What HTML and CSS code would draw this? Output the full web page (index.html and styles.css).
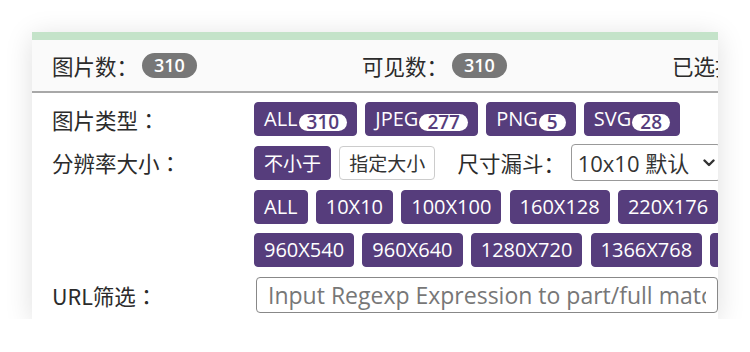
FILE: index.html
```html
<!DOCTYPE html>
<html lang="zh-CN">
<head>
<meta charset="utf-8">
<title>图片筛选</title>
<link rel="stylesheet" href="styles.css">
</head>
<body>
<div class="panel">
  <div class="stats">
    <div class="stat">图片数：<span class="count">310</span></div>
    <div class="stat">可见数：<span class="count">310</span></div>
    <div class="stat">已选择：<span class="count">0</span></div>
  </div>
  <div class="filters">
    <div class="label">图片类型<span class="colon">：</span></div>
    <div class="cell">
      <div class="row">
        <button class="btn">ALL<span class="badge">310</span></button>
        <button class="btn">JPEG<span class="badge">277</span></button>
        <button class="btn">PNG<span class="badge">5</span></button>
        <button class="btn">SVG<span class="badge">28</span></button>
      </div>
    </div>

    <div class="label">分辨率大小<span class="colon">：</span></div>
    <div class="cell">
      <div class="row">
        <button class="btn btn-cjk">不小于</button>
        <button class="btn btn-cjk btn-outline">指定大小</button>
        <span class="funnel-label">尺寸漏斗<span class="colon">：</span></span>
        <div class="select-box">
          <select class="select">
            <option>10x10 默认</option>
            <option>100x100</option>
          </select>
          <svg class="chevron" width="12" height="8" viewBox="0 0 12 8"><path d="M1.5 1.5 L6 6 L10.5 1.5" fill="none" stroke="#333" stroke-width="2.4" stroke-linecap="round" stroke-linejoin="round"/></svg>
        </div>
      </div>
      <div class="row">
        <button class="btn">ALL</button>
        <button class="btn">10X10</button>
        <button class="btn">100X100</button>
        <button class="btn">160X128</button>
        <button class="btn">220X176</button>
        <button class="btn">240X320</button>
      </div>
      <div class="row">
        <button class="btn">960X540</button>
        <button class="btn">960X640</button>
        <button class="btn">1280X720</button>
        <button class="btn">1366X768</button>
        <button class="btn">1920X1080</button>
      </div>
    </div>

    <div class="label label-input">URL筛选<span class="colon">：</span></div>
    <div class="cell">
      <div class="row row-last">
        <input class="url-input" type="text" placeholder="Input Regexp Expression to part/full match URL">
      </div>
    </div>
  </div>
</div>
</body>
</html>
```

FILE: styles.css
```css
html, body {
  margin: 0;
  padding: 0;
  background: #fff;
}

body {
  font-family: "Noto Sans CJK SC", "Open Sans", sans-serif;
  color: #2b2b2b;
}

.panel {
  margin: 32px 0 0 32px;
  width: 686px;
  height: 287px;
  box-sizing: border-box;
  border-top: 8px solid #c4e3c9;
  background: #fff;
  overflow: hidden;
  box-shadow: 0 4px 26px rgba(0, 0, 0, 0.13);
}

.stats {
  display: flex;
  height: 51px;
  background: #fafafa;
  border-bottom: 2px solid #a8a8a8;
}

.stat {
  flex: none;
  width: 310px;
  box-sizing: border-box;
  padding-left: 20px;
  display: flex;
  align-items: center;
  font-size: 21.5px;
  white-space: nowrap;
}

.count {
  margin-left: 4px;
  height: 25px;
  line-height: 25px;
  padding: 0 12px;
  border-radius: 13px;
  background: #777;
  color: #fff;
  font-family: "Open Sans", sans-serif;
  font-size: 18px;
  font-weight: 600;
}

.colon {
  font-family: "Noto Sans CJK TC", "Noto Sans CJK SC", sans-serif;
}

.filters {
  display: grid;
  grid-template-columns: 222px 1fr;
  padding-top: 9px;
}

.label {
  padding-left: 20px;
  height: 34px;
  display: flex;
  align-items: center;
  font-size: 21.5px;
  white-space: nowrap;
}

.label-input {
  height: 36px;
}

.cell {
  min-width: 0;
}

.row {
  display: flex;
  align-items: center;
  gap: 8.2px;
  height: 34px;
  margin-bottom: 9.75px;
  white-space: nowrap;
}

.row-last {
  height: 36px;
  margin-bottom: 0;
}

.btn {
  flex: none;
  display: flex;
  align-items: center;
  height: 34px;
  box-sizing: border-box;
  padding: 0 9px;
  border: 1px solid #563d7c;
  border-radius: 4px;
  background: #563d7c;
  color: #fff;
  font-family: "Open Sans", "Noto Sans CJK SC", sans-serif;
  font-size: 20px;
  line-height: 32px;
}

.btn-cjk {
  font-family: "Noto Sans CJK SC", sans-serif;
  font-size: 19px;
}

.btn-outline {
  background: #fff;
  border-color: #ccc;
  color: #333;
}

.badge {
  margin-left: 1px;
  margin-top: 6px;
  height: 17px;
  line-height: 17px;
  padding: 0 8px;
  border-radius: 9px;
  background: #fff;
  color: #563d7c;
  font-size: 19px;
  font-weight: 600;
}

.funnel-label {
  margin-left: 14px;
  font-size: 21.5px;
}

.select-box {
  flex: none;
  display: flex;
  align-items: center;
  width: 150px;
  height: 37px;
  margin: -1.5px 0 -1.5px -2.5px;
  box-sizing: border-box;
  border: 1px solid #999;
  border-radius: 4px;
  background: #fff;
}

.select {
  appearance: none;
  -webkit-appearance: none;
  border: none;
  background: transparent;
  padding: 0 0 0 6px;
  margin: 0;
  width: 131px;
  font-family: "Open Sans", "Noto Sans CJK SC", sans-serif;
  font-size: 22px;
  color: #333;
  outline: none;
}

.chevron {
  flex: none;
}

.url-input {
  width: 600px;
  height: 36px;
  box-sizing: border-box;
  margin-left: 2px;
  padding: 0 11px;
  border: 1px solid #888;
  border-radius: 4px;
  font-family: "Open Sans", sans-serif;
  font-size: 23px;
  color: #333;
  outline: none;
}

.url-input::placeholder {
  color: #777;
}
```
